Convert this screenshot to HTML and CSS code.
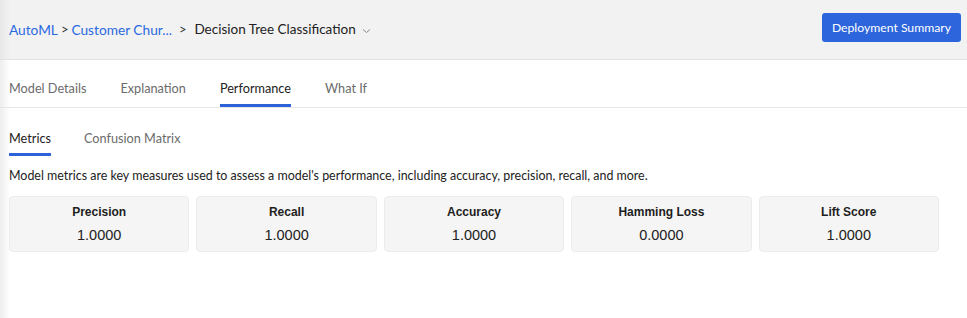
FILE: index.html
```html
<!DOCTYPE html>
<html lang="en">
<head>
    <meta charset="UTF-8">
    <title>Decision Tree Classification - Performance</title>
    <link rel="stylesheet" href="styles.css">
</head>
<body>

    <div class="topbar">
        <div class="crumbs">
            <a class="crumb-link" href="#">AutoML</a>
            <span class="crumb-sep">&gt;</span>
            <a class="crumb-link" href="#">Customer Chur...</a>
            <span class="crumb-sep last">&gt;</span>
            <span class="crumb-current">Decision Tree Classification</span>
            <svg class="crumb-caret" width="9" height="6" viewBox="0 0 9 6">
                <path d="M1 1.5 L4.5 4.5 L8 1.5" fill="none" stroke="#8a8a8a" stroke-width="1"/>
            </svg>
        </div>
        <button class="primary-btn">Deployment Summary</button>
    </div>

    <div class="tabs">
        <div class="tab">Model Details</div>
        <div class="tab">Explanation</div>
        <div class="tab active">Performance</div>
        <div class="tab">What If</div>
    </div>

    <div class="content">
        <div class="subtabs">
            <div class="subtab active">Metrics</div>
            <div class="subtab">Confusion Matrix</div>
        </div>

        <p class="desc">Model metrics are key measures used to assess a model's performance, including accuracy, precision, recall, and more.</p>

        <div class="metrics">
            <div class="metric">
                <div class="metric-name">Precision</div>
                <div class="metric-value">1.0000</div>
            </div>
            <div class="metric">
                <div class="metric-name">Recall</div>
                <div class="metric-value">1.0000</div>
            </div>
            <div class="metric">
                <div class="metric-name">Accuracy</div>
                <div class="metric-value">1.0000</div>
            </div>
            <div class="metric">
                <div class="metric-name">Hamming Loss</div>
                <div class="metric-value">0.0000</div>
            </div>
            <div class="metric">
                <div class="metric-name">Lift Score</div>
                <div class="metric-value">1.0000</div>
            </div>
        </div>
    </div>

</body>
</html>
```

FILE: styles.css
```css
* {
    margin: 0;
    padding: 0;
    box-sizing: border-box;
}
body {
    font-family: Lato, "Noto Sans", sans-serif;
    color: #222;
    background: linear-gradient(to right, #eeeeee, #fff 10px);
    min-height: 100vh;
}

/* top bar with breadcrumb */
.topbar {
    height: 60px;
    display: flex;
    align-items: center;
    justify-content: space-between;
    padding: 0 6px 1px 9px;
    background: linear-gradient(to right, #e8e8e8, #f2f2f2 10px);
    border-bottom: 1px solid #e2e2e2;
}
.crumbs {
    display: flex;
    align-items: center;
    font-size: 13.7px;
}
.crumb-link {
    color: #2a6ae0;
    text-decoration: none;
}
.crumb-sep {
    margin: 0 3px 0 3px;
    font-size: 13px;
    color: #333;
}
.crumb-sep.last {
    margin: 0 8px 0 7px;
}
.crumb-current {
    font-size: 13.5px;
    color: #222;
}
.crumb-caret {
    margin: 3px 0 0 6px;
}
.primary-btn {
    height: 29px;
    margin-bottom: 3px;
    padding: 0 10px;
    background: #2c65dc;
    color: #fff;
    border: none;
    border-radius: 3px;
    font-family: inherit;
    font-size: 12.2px;
    cursor: pointer;
}

/* main tabs */
.tabs {
    display: flex;
    gap: 34px;
    padding: 0 9px;
    height: 48px;
    border-bottom: 1px solid #e6e6e6;
}
.tab {
    display: flex;
    align-items: center;
    padding-top: 12px;
    font-size: 12.7px;
    color: #6b6b6b;
    border-bottom: 3px solid transparent;
}
.tab.active {
    color: #222;
    border-bottom-color: #2c63d9;
}

.content {
    padding: 0 28px 0 9px;
}
.subtabs {
    display: flex;
    gap: 33px;
    height: 48px;
}
.subtab {
    display: flex;
    align-items: center;
    padding-top: 14px;
    font-size: 12.7px;
    color: #6b6b6b;
    border-bottom: 3px solid transparent;
}
.subtab.active {
    color: #222;
    border-bottom-color: #2c63d9;
}
.desc {
    margin-top: 12px;
    font-size: 12.45px;
    color: #222;
}

/* metric cards */
.metrics {
    display: grid;
    grid-template-columns: repeat(5, 1fr);
    gap: 7px;
    margin-top: 13px;
}
.metric {
    height: 56px;
    background: #f5f5f5;
    border: 1px solid #ececec;
    border-radius: 4px;
    text-align: center;
    font-family: "Liberation Sans", Arial, sans-serif;
    padding-top: 8px;
}
.metric-name {
    font-size: 12px;
    font-weight: bold;
    color: #1e1e1e;
}
.metric-value {
    margin-top: 8px;
    font-size: 14.5px;
    color: #222;
}
```
